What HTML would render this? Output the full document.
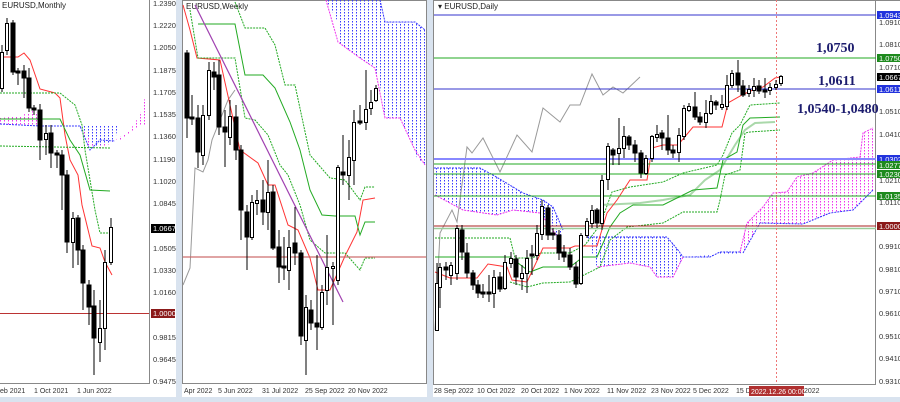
<!DOCTYPE html><html><head><meta charset="utf-8"><style>
html,body{margin:0;padding:0;background:#fff;width:900px;height:402px;overflow:hidden}
svg text{font-family:"Liberation Sans",sans-serif;font-size:7.5px;fill:#333}
.d{font-size:7px}
.t{font-size:8px;fill:#222}
.b{font-family:"Liberation Serif",serif;font-weight:bold;font-size:14px;fill:#1c1c6e}
</style></head><body>
<svg width="900" height="402" viewBox="0 0 900 402" xmlns="http://www.w3.org/2000/svg">
<defs>
<pattern id="pb" width="4" height="3" patternUnits="userSpaceOnUse"><rect x="0" y="0" width="1" height="1.5" fill="#3a3aff"/></pattern>
<pattern id="pm" width="4" height="3" patternUnits="userSpaceOnUse"><rect x="0" y="0" width="1" height="1.5" fill="#ee33ee"/></pattern>
</defs>
<rect x="0" y="397" width="900" height="5" fill="#d9e3ef"/>
<rect x="176" y="0" width="6" height="402" fill="#d9e3ef"/>
<rect x="427" y="0" width="6" height="402" fill="#d9e3ef"/>
<line x1="182.5" y1="0" x2="182.5" y2="384" stroke="#888"/>
<line x1="426.5" y1="0" x2="426.5" y2="384" stroke="#888"/>
<line x1="433.5" y1="0" x2="433.5" y2="384" stroke="#888"/>
<line x1="433" y1="0.5" x2="900" y2="0.5" stroke="#888"/>
<line x1="182" y1="0.5" x2="427" y2="0.5" stroke="#888"/>
<line x1="149.5" y1="0" x2="149.5" y2="383" stroke="#888"/>
<line x1="0" y1="383.5" x2="150" y2="383.5" stroke="#888"/>
<line x1="182" y1="383.5" x2="427" y2="383.5" stroke="#888"/>
<line x1="875.5" y1="0" x2="875.5" y2="384" stroke="#888"/>
<line x1="433" y1="384.5" x2="876" y2="384.5" stroke="#888"/>

<!-- ===== MONTHLY ===== -->
<text x="2" y="8" class="t">EURUSD,Monthly</text>
<polygon points="0,118 20,116 35,110 45,126 60,126 80,126 95,144 100,150 115,140 130,130 140,115 147,90 147,126 140,126 120,140 100,142 90,150 80,126 60,126 40,126 20,125 0,124" fill="url(#pm)"/>
<polygon points="60,126 80,126 95,146 115,141 118,126" fill="url(#pb)"/>
<polyline points="0,124 20,125 40,126 60,126 80,126 90,150 100,140 115,141" fill="none" stroke="#3a3aff" stroke-dasharray="2,1"/>
<polyline points="0,57 18,57 24,53 30,60 40,89 55,93 60,98 65,135 70,160 78,175 82,205 92,246 100,248 105,262 112,275" fill="none" stroke="#f33" stroke-width="1"/>
<polyline points="0,119 60,119 70,140 80,155 90,190 110,191" fill="none" stroke="#2a2" stroke-width="1"/>
<polyline points="0,93 60,93 75,105 82,125 85,150 90,180 95,210 100,233 110,233" fill="none" stroke="#2a2" stroke-dasharray="2,1"/>
<line x1="0" y1="146" x2="110" y2="148" stroke="#2a2" stroke-dasharray="2,1"/>
<line x1="0" y1="313.5" x2="149" y2="313.5" stroke="#b33" stroke-width="1"/>
<g stroke="#000" stroke-width="1">
<line x1="2" y1="45" x2="2" y2="92"/><line x1="7" y1="18" x2="7" y2="55"/><line x1="13" y1="20" x2="13" y2="75"/><line x1="18" y1="68" x2="18" y2="85"/><line x1="24" y1="65" x2="24" y2="98"/><line x1="29" y1="68" x2="29" y2="112"/><line x1="34" y1="105" x2="34" y2="115"/><line x1="40" y1="104" x2="40" y2="160"/><line x1="46" y1="125" x2="46" y2="155"/><line x1="51" y1="125" x2="51" y2="168"/><line x1="57" y1="150" x2="57" y2="168"/><line x1="62" y1="150" x2="62" y2="210"/><line x1="67" y1="170" x2="67" y2="253"/><line x1="73" y1="212" x2="73" y2="268"/><line x1="78" y1="215" x2="78" y2="265"/><line x1="83" y1="245" x2="83" y2="310"/><line x1="89" y1="280" x2="89" y2="325"/><line x1="94" y1="290" x2="94" y2="375"/><line x1="100" y1="300" x2="100" y2="362"/><line x1="105" y1="250" x2="105" y2="350"/><line x1="111" y1="218" x2="111" y2="265"/>
</g>
<g stroke="#000" stroke-width="1">
<rect x="0.5" y="52.5" width="3" height="36" fill="#fff"/><rect x="5.5" y="23.5" width="3" height="27" fill="#fff"/><rect x="11" y="23" width="4" height="49" fill="#000"/><rect x="16" y="71" width="4" height="2" fill="#000"/><rect x="22" y="71" width="4" height="7" fill="#000"/><rect x="27" y="78" width="4" height="30" fill="#000"/><rect x="32" y="108" width="4" height="2" fill="#000"/><rect x="38" y="110" width="4" height="30" fill="#000"/><rect x="44.5" y="133.5" width="3" height="6" fill="#fff"/><rect x="49" y="133" width="4" height="20" fill="#000"/><rect x="55" y="153" width="4" height="2" fill="#000"/><rect x="60" y="155" width="4" height="20" fill="#000"/><rect x="65" y="175" width="4" height="67" fill="#000"/><rect x="71.5" y="218.5" width="3" height="24" fill="#fff"/><rect x="76" y="218" width="4" height="32" fill="#000"/><rect x="81" y="250" width="4" height="33" fill="#000"/><rect x="87" y="285" width="4" height="22" fill="#000"/><rect x="92" y="306" width="4" height="32" fill="#000"/><rect x="98.5" y="328.5" width="3" height="14" fill="#fff"/><rect x="103.5" y="262.5" width="3" height="66" fill="#fff"/><rect x="109.5" y="227.5" width="3" height="35" fill="#fff"/>
</g>
<g>
<text x="153" y="6">1.2390</text><text x="153" y="28">1.2220</text><text x="153" y="50">1.2050</text><text x="153" y="73">1.1875</text><text x="153" y="95">1.1705</text><text x="153" y="117">1.1535</text><text x="153" y="139">1.1360</text><text x="153" y="162">1.1190</text><text x="153" y="184">1.1020</text><text x="153" y="206">1.0845</text>
<rect x="151" y="224" width="24" height="9" fill="#000"/><text x="153" y="231" style="fill:#fff">1.0667</text>
<text x="153" y="251">1.0505</text><text x="153" y="273">1.0330</text><text x="153" y="295">1.0160</text>
<rect x="151" y="309" width="24" height="9" fill="#8b1a1a"/><text x="153" y="316" style="fill:#fff">1.0000</text>
<text x="153" y="340">0.9815</text><text x="153" y="362">0.9645</text><text x="153" y="384">0.9475</text>
<text x="0" y="393" class="d">eb 2021</text><text x="34" y="393" class="d">1 Oct 2021</text><text x="77" y="393" class="d">1 Jun 2022</text>
</g>

<!-- ===== WEEKLY ===== -->
<text x="186" y="9" class="t">EURUSD,Weekly</text>
<polygon points="326,0 380,0 385,22 415,22 425,30 425,165 418,160 408,135 400,118 385,118 380,85 375,68 360,58 338,42 338,22 326,0" fill="url(#pb)"/>
<polyline points="326,0 338,42 360,58 375,68 385,118 400,118 415,150 425,165" fill="none" stroke="#e3e" stroke-dasharray="2,1"/>
<polyline points="380,0 385,22 415,22 425,30" fill="none" stroke="#33f" stroke-dasharray="2,1"/>
<polyline points="183,285 190,268 195,168 203,172 208,160 212,140 220,120 228,100 235,90" fill="none" stroke="#999"/>
<polyline points="183,5 190,30 197,58 220,60 240,150 258,163 268,185 275,185 288,225 298,230 310,258 318,290 330,290 345,256 357,232 363,200 375,198" fill="none" stroke="#f33"/>
<polyline points="198,24 235,24 245,75 263,75 275,88 290,122 300,150 310,190 322,215 335,216 355,216 360,235 365,222 375,222" fill="none" stroke="#2a2"/>
<polyline points="190,10 198,58 235,58 245,118 255,120 268,135 280,165 288,175 300,205 310,240 325,253 345,253 360,270 365,258 375,258" fill="none" stroke="#2a2" stroke-dasharray="2,1"/>
<polyline points="235,2 245,28 265,28 275,45 285,85 295,85 310,155 330,178 345,180 360,200 365,187 375,187" fill="none" stroke="#2a2" stroke-dasharray="2,1"/>
<line x1="195" y1="5" x2="343" y2="302" stroke="#a040b0" stroke-width="1.2"/>
<line x1="183" y1="257" x2="426" y2="257" stroke="#c66" stroke-opacity="0.8" stroke-width="1.5"/>
<g stroke="#000">
<line x1="187" y1="50" x2="187" y2="138"/><line x1="192" y1="95" x2="192" y2="125"/><line x1="198" y1="105" x2="198" y2="168"/><line x1="203" y1="105" x2="203" y2="165"/><line x1="209" y1="62" x2="209" y2="120"/><line x1="214" y1="62" x2="214" y2="90"/><line x1="219" y1="60" x2="219" y2="135"/><line x1="225" y1="110" x2="225" y2="167"/><line x1="230" y1="100" x2="230" y2="145"/><line x1="236" y1="105" x2="236" y2="160"/><line x1="241" y1="145" x2="241" y2="240"/><line x1="247" y1="205" x2="247" y2="270"/><line x1="252" y1="195" x2="252" y2="240"/><line x1="257" y1="190" x2="257" y2="215"/><line x1="263" y1="180" x2="263" y2="225"/><line x1="268" y1="160" x2="268" y2="230"/><line x1="273" y1="185" x2="273" y2="250"/><line x1="279" y1="230" x2="279" y2="283"/><line x1="284" y1="237" x2="284" y2="280"/><line x1="289" y1="230" x2="289" y2="290"/><line x1="295" y1="207" x2="295" y2="265"/><line x1="301" y1="250" x2="301" y2="345"/><line x1="306" y1="295" x2="306" y2="375"/><line x1="311" y1="300" x2="311" y2="330"/><line x1="317" y1="255" x2="317" y2="350"/><line x1="322" y1="285" x2="322" y2="330"/><line x1="327" y1="235" x2="327" y2="305"/><line x1="333" y1="262" x2="333" y2="325"/><line x1="338" y1="165" x2="338" y2="285"/><line x1="343" y1="135" x2="343" y2="185"/><line x1="349" y1="140" x2="349" y2="200"/><line x1="354" y1="110" x2="354" y2="185"/><line x1="360" y1="105" x2="360" y2="125"/><line x1="366" y1="70" x2="366" y2="130"/><line x1="371" y1="90" x2="371" y2="115"/><line x1="376" y1="85" x2="376" y2="102"/>
<rect x="185" y="53" width="4" height="65" fill="#000"/><rect x="190" y="117" width="4" height="2" fill="#000"/><rect x="196" y="118" width="4" height="34" fill="#000"/><rect x="201.5" y="115.5" width="3" height="40" fill="#fff"/><rect x="207.5" y="70.5" width="3" height="45" fill="#fff"/><rect x="212" y="72" width="4" height="5" fill="#000"/><rect x="217" y="75" width="4" height="52" fill="#000"/><rect x="223" y="127" width="4" height="5" fill="#000"/><rect x="228.5" y="116.5" width="3" height="21" fill="#fff"/><rect x="234" y="117" width="4" height="33" fill="#000"/><rect x="239" y="150" width="4" height="60" fill="#000"/><rect x="245" y="212" width="4" height="25" fill="#000"/><rect x="250.5" y="202.5" width="3" height="35" fill="#fff"/><rect x="255.5" y="200.5" width="3" height="3" fill="#fff"/><rect x="261" y="200" width="4" height="12" fill="#000"/><rect x="266.5" y="192.5" width="3" height="20" fill="#fff"/><rect x="271" y="192" width="4" height="56" fill="#000"/><rect x="277" y="247" width="4" height="20" fill="#000"/><rect x="282" y="266" width="4" height="2" fill="#000"/><rect x="287.5" y="247.5" width="3" height="23" fill="#fff"/><rect x="293" y="243" width="4" height="10" fill="#000"/><rect x="299" y="253" width="4" height="83" fill="#000"/><rect x="304.5" y="307.5" width="3" height="33" fill="#fff"/><rect x="309" y="310" width="4" height="13" fill="#000"/><rect x="315" y="323" width="4" height="4" fill="#000"/><rect x="320.5" y="292.5" width="3" height="35" fill="#fff"/><rect x="325.5" y="267.5" width="3" height="23" fill="#fff"/><rect x="331.5" y="266.5" width="3" height="2" fill="#fff"/><rect x="336.5" y="167.5" width="3" height="113" fill="#fff"/><rect x="341" y="172" width="4" height="3" fill="#000"/><rect x="347.5" y="157.5" width="3" height="18" fill="#fff"/><rect x="352.5" y="122.5" width="3" height="38" fill="#fff"/><rect x="358" y="121" width="4" height="2" fill="#000"/><rect x="364.5" y="109.5" width="3" height="13" fill="#fff"/><rect x="369.5" y="102.5" width="3" height="6" fill="#fff"/><rect x="374.5" y="88.5" width="3" height="12" fill="#fff"/>
</g>
<text x="184" y="393" class="d">Apr 2022</text><text x="218" y="393" class="d">5 Jun 2022</text><text x="262" y="393" class="d">31 Jul 2022</text><text x="305" y="393" class="d">25 Sep 2022</text><text x="348" y="393" class="d">20 Nov 2022</text>

<!-- ===== DAILY ===== -->
<text x="438" y="9" class="t">▾ EURUSD,Daily</text>
<!-- clouds -->
<polygon points="434,168 480,168 493,175 523,193 543,200 553,207 563,230 560,240 540,213 513,210 497,215 463,210 435,195" fill="url(#pb)"/>
<polyline points="435,195 463,210 497,215 513,210 540,213 560,240" fill="none" stroke="#e3e" stroke-dasharray="2,1"/>
<polyline points="434,168 480,168 493,175 523,193 543,200 553,207 563,230" fill="none" stroke="#33f" stroke-dasharray="2,1"/>
<polygon points="587,237 667,237 678,250 683,257 710,257 720,252 740,252 743,253 683,257 673,277 657,277 650,267 630,263 597,267" fill="url(#pb)"/>
<polygon points="587,237 667,237 678,250 683,257 673,277 657,277 650,267 630,263 597,267" fill="url(#pb)"/>
<polyline points="587,237 667,237 678,250 683,257 710,257 720,252 740,252" fill="none" stroke="#33f" stroke-dasharray="2,1"/>
<polyline points="597,267 630,263 650,267 657,277 673,277 683,257" fill="none" stroke="#e3e" stroke-dasharray="2,1"/>
<polygon points="740,252 747,223 763,207 773,193 787,192 797,177 813,173 833,160 860,157 863,133 873,128 873,190 853,210 830,213 803,224 760,223 743,253" fill="url(#pm)"/>
<polyline points="740,252 747,223 763,207 773,193 787,192 797,177 813,173 833,160 860,157 863,133 873,128" fill="none" stroke="#e3e" stroke-dasharray="2,1"/>
<polyline points="743,253 760,223 803,224 830,213 853,210 873,190" fill="none" stroke="#33f" stroke-dasharray="2,1"/>
<!-- gray chikou -->
<polyline points="435,330 440,233 452,210 457,222 467,147 472,153 483,138 500,172 517,135 532,152 543,108 560,122 570,105 580,105 592,74 603,95 613,87 623,93 640,77" fill="none" stroke="#999"/>
<!-- ichimoku lines -->
<polyline points="435,238 510,238 515,258 533,258 540,253 570,253 585,245 600,225 612,192 630,187 663,182 683,173 717,165 723,155 732,133 740,125 750,105 780,103" fill="none" stroke="#2a2" stroke-dasharray="2,1"/>
<polyline points="510,282 527,287 543,283 570,282 600,267 610,240 627,227 663,223 683,212 717,212 720,200 725,175 740,170 745,133 750,132 780,130" fill="none" stroke="#2a2" stroke-dasharray="2,1"/>
<polyline points="600,205 640,203 663,200 690,195 705,180 720,170 735,145 745,130 755,123 775,122" fill="none" stroke="#aad8aa" stroke-width="2"/>
<polyline points="435,257 510,257 530,272 543,267 570,267 583,257 597,257 610,227 620,213 633,205 663,205 693,190 717,188 723,160 737,152 743,125 750,118 780,117" fill="none" stroke="#2a2"/>
<polyline points="435,272 450,278 477,278 488,264 507,267 512,280 527,282 543,248 570,248 575,246 597,246 607,213 617,200 630,180 647,180 652,148 663,145 678,145 693,127 722,127 728,103 742,95 755,89 763,87 775,78 780,77" fill="none" stroke="#f33"/>
<!-- horizontal levels -->
<line x1="434" y1="15" x2="876" y2="15" stroke="#33c" stroke-width="1"/>
<line x1="434" y1="58" x2="876" y2="58" stroke="#2a2" stroke-width="1"/>
<line x1="434" y1="89" x2="876" y2="89" stroke="#33c" stroke-width="1"/>
<line x1="434" y1="159" x2="876" y2="159" stroke="#88f" stroke-width="2"/>
<line x1="434" y1="164" x2="876" y2="164" stroke="#2a2" stroke-width="1"/>
<line x1="434" y1="174" x2="876" y2="174" stroke="#2a2" stroke-width="1"/>
<line x1="434" y1="196" x2="876" y2="196" stroke="#2a2" stroke-width="1"/>
<line x1="434" y1="226" x2="876" y2="226" stroke="#a22" stroke-width="1"/>
<line x1="434" y1="228.5" x2="876" y2="228.5" stroke="#9c9" stroke-width="1.5"/>
<line x1="776.5" y1="0" x2="776.5" y2="384" stroke="#e77" stroke-dasharray="2,2"/>
<!-- candles -->
<g stroke="#000">
<line x1="437" y1="263" x2="437" y2="330"/><line x1="440" y1="263" x2="440" y2="308"/><line x1="446" y1="262" x2="446" y2="280"/><line x1="451" y1="262" x2="451" y2="285"/><line x1="457" y1="225" x2="457" y2="280"/><line x1="462" y1="225" x2="462" y2="260"/><line x1="467" y1="243" x2="467" y2="278"/><line x1="473" y1="270" x2="473" y2="290"/><line x1="478" y1="280" x2="478" y2="298"/><line x1="483" y1="284" x2="483" y2="298"/><line x1="489" y1="275" x2="489" y2="302"/><line x1="494" y1="270" x2="494" y2="308"/><line x1="500" y1="272" x2="500" y2="292"/><line x1="505" y1="255" x2="505" y2="290"/><line x1="511" y1="252" x2="511" y2="268"/><line x1="516" y1="255" x2="516" y2="285"/><line x1="522" y1="265" x2="522" y2="290"/><line x1="527" y1="250" x2="527" y2="293"/><line x1="532" y1="245" x2="532" y2="275"/><line x1="537" y1="225" x2="537" y2="260"/><line x1="542" y1="200" x2="542" y2="240"/><line x1="548" y1="205" x2="548" y2="240"/><line x1="553" y1="228" x2="553" y2="240"/><line x1="559" y1="230" x2="559" y2="260"/><line x1="564" y1="245" x2="564" y2="262"/><line x1="570" y1="248" x2="570" y2="270"/><line x1="576" y1="262" x2="576" y2="288"/><line x1="581" y1="233" x2="581" y2="285"/><line x1="587" y1="218" x2="587" y2="238"/><line x1="592" y1="205" x2="592" y2="228"/><line x1="597" y1="208" x2="597" y2="228"/><line x1="602" y1="175" x2="602" y2="230"/><line x1="608" y1="143" x2="608" y2="190"/><line x1="613" y1="148" x2="613" y2="165"/><line x1="619" y1="118" x2="619" y2="165"/><line x1="624" y1="126" x2="624" y2="158"/><line x1="629" y1="135" x2="629" y2="150"/><line x1="635" y1="140" x2="635" y2="162"/><line x1="641" y1="150" x2="641" y2="178"/><line x1="646" y1="155" x2="646" y2="175"/><line x1="652" y1="135" x2="652" y2="162"/><line x1="657" y1="125" x2="657" y2="142"/><line x1="662" y1="130" x2="662" y2="150"/><line x1="668" y1="115" x2="668" y2="155"/><line x1="673" y1="145" x2="673" y2="158"/><line x1="679" y1="128" x2="679" y2="162"/><line x1="684" y1="105" x2="684" y2="140"/><line x1="689" y1="103" x2="689" y2="112"/><line x1="695" y1="92" x2="695" y2="120"/><line x1="700" y1="112" x2="700" y2="125"/><line x1="706" y1="100" x2="706" y2="128"/><line x1="711" y1="95" x2="711" y2="115"/><line x1="716" y1="100" x2="716" y2="110"/><line x1="722" y1="95" x2="722" y2="110"/><line x1="727" y1="75" x2="727" y2="110"/><line x1="732" y1="70" x2="732" y2="88"/><line x1="738" y1="60" x2="738" y2="92"/><line x1="743" y1="80" x2="743" y2="97"/><line x1="749" y1="85" x2="749" y2="97"/><line x1="754" y1="78" x2="754" y2="97"/><line x1="759" y1="80" x2="759" y2="94"/><line x1="765" y1="78" x2="765" y2="98"/><line x1="770" y1="83" x2="770" y2="95"/><line x1="776" y1="80" x2="776" y2="90"/><line x1="781" y1="75" x2="781" y2="86"/>
<rect x="435.5" y="283.5" width="3" height="47" fill="#fff"/><rect x="438.5" y="267.5" width="3" height="20" fill="#fff"/><rect x="444" y="267" width="4" height="3" fill="#000"/><rect x="449.5" y="265.5" width="3" height="10" fill="#fff"/><rect x="455.5" y="228.5" width="3" height="45" fill="#fff"/><rect x="460" y="230" width="4" height="22" fill="#000"/><rect x="465" y="253" width="4" height="20" fill="#000"/><rect x="471" y="273" width="4" height="12" fill="#000"/><rect x="476" y="285" width="4" height="8" fill="#000"/><rect x="481" y="292" width="4" height="2" fill="#000"/><rect x="487" y="292" width="4" height="2" fill="#000"/><rect x="492.5" y="277.5" width="3" height="16" fill="#fff"/><rect x="498" y="277" width="4" height="12" fill="#000"/><rect x="503.5" y="262.5" width="3" height="26" fill="#fff"/><rect x="509.5" y="258.5" width="3" height="5" fill="#fff"/><rect x="514" y="259" width="4" height="18" fill="#000"/><rect x="520.5" y="273.5" width="3" height="5" fill="#fff"/><rect x="525.5" y="258.5" width="3" height="15" fill="#fff"/><rect x="530" y="254" width="4" height="2" fill="#000"/><rect x="535.5" y="233.5" width="3" height="22" fill="#fff"/><rect x="540.5" y="206.5" width="3" height="28" fill="#fff"/><rect x="546" y="208" width="4" height="27" fill="#000"/><rect x="551" y="233" width="4" height="2" fill="#000"/><rect x="557" y="235" width="4" height="18" fill="#000"/><rect x="562" y="252" width="4" height="5" fill="#000"/><rect x="568" y="255" width="4" height="12" fill="#000"/><rect x="574" y="267" width="4" height="17" fill="#000"/><rect x="579.5" y="235.5" width="3" height="48" fill="#fff"/><rect x="585.5" y="221.5" width="3" height="14" fill="#fff"/><rect x="590.5" y="210.5" width="3" height="13" fill="#fff"/><rect x="595" y="210" width="4" height="13" fill="#000"/><rect x="600.5" y="180.5" width="3" height="43" fill="#fff"/><rect x="606.5" y="146.5" width="3" height="33" fill="#fff"/><rect x="611" y="150" width="4" height="5" fill="#000"/><rect x="617.5" y="148.5" width="3" height="5" fill="#fff"/><rect x="622.5" y="136.5" width="3" height="12" fill="#fff"/><rect x="627" y="137" width="4" height="8" fill="#000"/><rect x="633" y="145" width="4" height="8" fill="#000"/><rect x="639" y="153" width="4" height="20" fill="#000"/><rect x="644.5" y="158.5" width="3" height="15" fill="#fff"/><rect x="650.5" y="136.5" width="3" height="22" fill="#fff"/><rect x="655.5" y="134.5" width="3" height="3" fill="#fff"/><rect x="660" y="133" width="4" height="5" fill="#000"/><rect x="666" y="138" width="4" height="12" fill="#000"/><rect x="671" y="150" width="4" height="3" fill="#000"/><rect x="677.5" y="135.5" width="3" height="17" fill="#fff"/><rect x="682.5" y="108.5" width="3" height="28" fill="#fff"/><rect x="687.5" y="106.5" width="3" height="4" fill="#fff"/><rect x="693" y="107" width="4" height="10" fill="#000"/><rect x="698" y="117" width="4" height="5" fill="#000"/><rect x="704.5" y="113.5" width="3" height="9" fill="#fff"/><rect x="709.5" y="101.5" width="3" height="12" fill="#fff"/><rect x="714" y="102" width="4" height="3" fill="#000"/><rect x="720.5" y="104.5" width="3" height="3" fill="#fff"/><rect x="725.5" y="85.5" width="3" height="21" fill="#fff"/><rect x="730.5" y="73.5" width="3" height="12" fill="#fff"/><rect x="736" y="73" width="4" height="12" fill="#000"/><rect x="741" y="86" width="4" height="9" fill="#000"/><rect x="747.5" y="89.5" width="3" height="4" fill="#fff"/><rect x="752.5" y="86.5" width="3" height="4" fill="#fff"/><rect x="757" y="86" width="4" height="5" fill="#000"/><rect x="763" y="90" width="4" height="2" fill="#000"/><rect x="768.5" y="87.5" width="3" height="3" fill="#fff"/><rect x="774.5" y="84.5" width="3" height="3" fill="#fff"/><rect x="779.5" y="76.5" width="3" height="7" fill="#fff"/>
</g>
<text x="816" y="52" class="b">1,0750</text>
<text x="818" y="85" class="b">1,0611</text>
<text x="797" y="113" class="b">1,0540-1,0480</text>
<g>
<rect x="877" y="11" width="23" height="8" fill="#2233dd"/><text x="879" y="18" style="fill:#fff">1.0943</text>
<text x="879" y="25">1.0910</text><text x="879" y="47">1.0810</text>
<rect x="877" y="54" width="23" height="8" fill="#1e8a1e"/><text x="879" y="61" style="fill:#fff">1.0750</text>
<text x="879" y="70">1.0710</text>
<rect x="877" y="73" width="23" height="8" fill="#000"/><text x="879" y="80" style="fill:#fff">1.0667</text>
<rect x="877" y="85" width="23" height="8" fill="#2233dd"/><text x="879" y="92" style="fill:#fff">1.0611</text>
<text x="879" y="114">1.0510</text><text x="879" y="137">1.0410</text>
<rect x="877" y="155" width="23" height="8" fill="#2233dd"/><text x="879" y="162" style="fill:#fff">1.0302</text>
<rect x="877" y="161" width="23" height="8" fill="#1e8a1e"/><text x="879" y="168" style="fill:#fff">1.0277</text>
<rect x="877" y="170" width="23" height="8" fill="#1e8a1e"/><text x="879" y="177" style="fill:#fff">1.0230</text>
<text x="879" y="183">1.0210</text>
<rect x="877" y="192" width="23" height="8" fill="#1e8a1e"/><text x="879" y="199" style="fill:#fff">1.0135</text>
<text x="879" y="205">1.0110</text>
<rect x="877" y="222" width="23" height="8" fill="#8b1a1a"/><text x="879" y="229" style="fill:#fff">1.0000</text>
<text x="879" y="249">0.9910</text><text x="879" y="272">0.9810</text><text x="879" y="294">0.9710</text><text x="879" y="316">0.9610</text><text x="879" y="339">0.9510</text><text x="879" y="361">0.9410</text><text x="879" y="384">0.9310</text>
<text x="434" y="393" class="d">28 Sep 2022</text><text x="477" y="393" class="d">10 Oct 2022</text><text x="521" y="393" class="d">20 Oct 2022</text><text x="564" y="393" class="d">1 Nov 2022</text><text x="607" y="393" class="d">11 Nov 2022</text><text x="651" y="393" class="d">23 Nov 2022</text><text x="693" y="393" class="d">5 Dec 2022</text><text x="736" y="393" class="d">15 D</text>
<rect x="749" y="386" width="55" height="10" fill="#b03030"/><text x="751" y="394" class="d" style="fill:#fff">2022.12.26 00:00</text>
<text x="804" y="393" class="d">2022</text>
</g>
</svg>
</body></html>
